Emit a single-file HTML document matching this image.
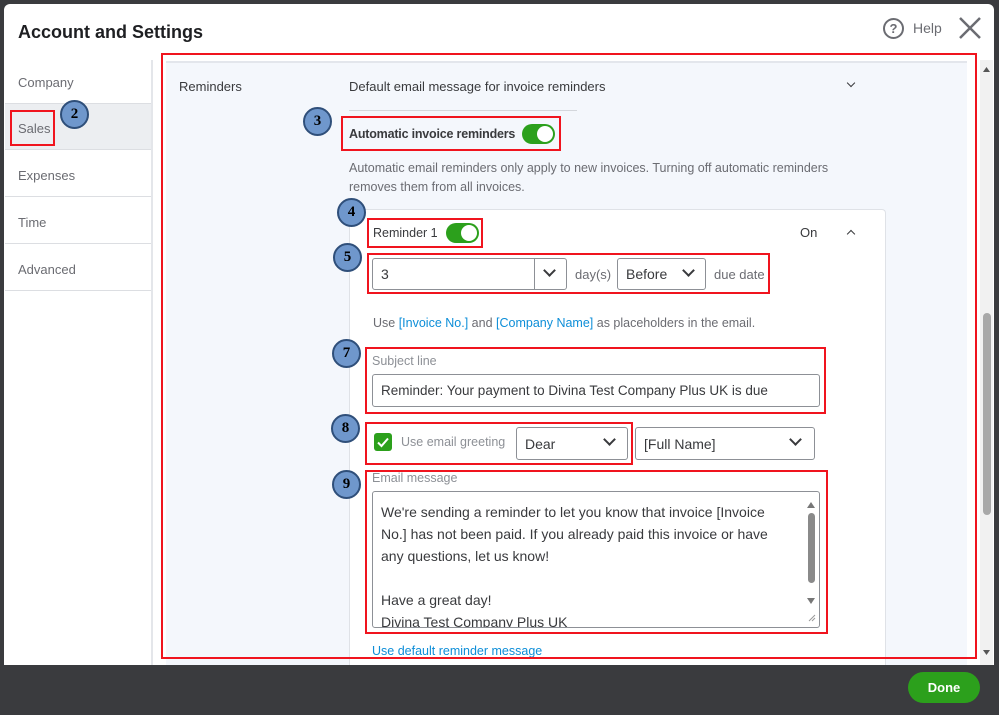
<!DOCTYPE html>
<html><head><meta charset="utf-8"><style>
*{box-sizing:border-box;margin:0;padding:0}
body{width:999px;height:715px;background:#3a3b3e;position:relative;overflow:hidden;font-family:"Liberation Sans",sans-serif;color:#393a3d}
.a{position:absolute}
.red{position:absolute;border:2px solid #f0141e}
.c{position:absolute;width:29px;height:29px;border-radius:50%;background:#6f97cc;border:2px solid #2f4f7a;font:bold 15px "Liberation Serif",serif;color:#000;text-align:center;line-height:25px}
.sb{position:absolute;left:5px;width:146px;height:46px;border-bottom:1px solid #dcdee2;font-size:13px;color:#6b6c72;padding:17px 0 0 13px}
.inp{position:absolute;border:1px solid #8d9096;border-radius:3px;background:#fff;font-size:14px;color:#393a3d}
.chev{position:absolute;width:9px;height:9px;border-right:2px solid #393a3d;border-bottom:2px solid #393a3d;transform:rotate(45deg)}
.tog{position:absolute;width:33px;height:20px;border-radius:10px;background:#2ca01c}
.tog:after{content:"";position:absolute;right:2px;top:2px;width:16px;height:16px;border-radius:50%;background:#fff}
.lnk{color:#0d8ed8}
</style></head><body>
<div class="a" style="left:4px;top:4px;width:990px;height:661px;background:#fff;border-radius:6px 6px 0 0"></div>
<div class="a" style="left:18px;top:22px;font-size:18px;font-weight:bold;color:#1e1f22">Account and Settings</div>
<div class="a" style="left:883px;top:18px;width:21px;height:21px;border:2px solid #6b6c72;border-radius:50%;font-size:13px;font-weight:bold;text-align:center;line-height:17px;color:#6b6c72">?</div>
<div class="a" style="left:913px;top:20px;font-size:14px;color:#6b6c72">Help</div>
<svg class="a" style="left:958px;top:16px" width="24" height="24"><path d="M2 2L22 22M22 2L2 22" stroke="#6b6c72" stroke-width="2.5"/></svg>
<div class="sb" style="top:58px">Company</div>
<div class="sb" style="top:104px;background:#eceef1">Sales</div>
<div class="sb" style="top:151px">Expenses</div>
<div class="sb" style="top:198px">Time</div>
<div class="sb" style="top:245px">Advanced</div>
<div class="a" style="left:151px;top:60px;width:2px;height:605px;background:#e4e6ea"></div>
<div class="a" style="left:166px;top:61px;width:801px;height:604px;background:#f4f7fc;border-top:2px solid #e3e6ec"></div>
<div class="a" style="left:179px;top:79px;font-size:13px;color:#393a3d">Reminders</div>
<div class="a" style="left:349px;top:79px;font-size:13px;color:#393a3d">Default email message for invoice reminders</div>
<div class="chev" style="left:848px;top:80px;width:6px;height:6px;border-width:1.5px"></div>
<div class="a" style="left:349px;top:110px;width:228px;height:1px;background:#d4d7dc"></div>
<div class="a" style="left:349px;top:127px;font-size:12.5px;font-weight:bold;color:#393a3d;letter-spacing:-0.2px">Automatic invoice reminders</div>
<div class="tog" style="left:522px;top:124px"></div>
<div class="a" style="left:349px;top:159px;font-size:12.5px;color:#6b6c72;line-height:19px;width:520px">Automatic email reminders only apply to new invoices. Turning off automatic reminders removes them from all invoices.</div>
<div class="a" style="left:349px;top:209px;width:537px;height:456px;background:#fff;border:1px solid #dfe2e7;border-bottom:none;border-radius:4px 4px 0 0"></div>
<div class="a" style="left:373px;top:226px;font-size:12.5px">Reminder 1</div>
<div class="tog" style="left:446px;top:223px"></div>
<div class="a" style="left:800px;top:225px;font-size:13px">On</div>
<div class="chev" style="left:848px;top:231px;width:6px;height:6px;border-width:1.5px;transform:rotate(225deg)"></div>
<div class="inp" style="left:372px;top:258px;width:195px;height:32px;padding:7px 8px">3</div>
<div class="a" style="left:534px;top:258px;width:1px;height:32px;background:#8d9096"></div>
<div class="chev" style="left:545px;top:266px"></div>
<div class="a" style="left:575px;top:267px;font-size:13px;color:#6b6c72">day(s)</div>
<div class="inp" style="left:617px;top:258px;width:89px;height:32px;padding:7px 8px">Before</div>
<div class="chev" style="left:684px;top:266px"></div>
<div class="a" style="left:714px;top:267px;font-size:13px;color:#6b6c72">due date</div>
<div class="a" style="left:373px;top:316px;font-size:12.5px;color:#6b6c72">Use <span class="lnk">[Invoice No.]</span> and <span class="lnk">[Company Name]</span> as placeholders in the email.</div>
<div class="a" style="left:372px;top:354px;font-size:12.5px;color:#8d9096">Subject line</div>
<div class="inp" style="left:372px;top:374px;width:448px;height:33px;padding:8px 8px;font-size:13.5px">Reminder: Your payment to Divina Test Company Plus UK is due</div>
<div class="a" style="left:374px;top:433px;width:18px;height:18px;border-radius:3px;background:#2ca01c"></div>
<svg class="a" style="left:374px;top:433px" width="18" height="18"><path d="M4 9.5L7.5 13L14 5.5" stroke="#fff" stroke-width="2" fill="none"/></svg>
<div class="a" style="left:401px;top:435px;font-size:12.5px;color:#8d9096">Use email greeting</div>
<div class="inp" style="left:516px;top:427px;width:112px;height:33px;padding:8px 8px">Dear</div>
<div class="chev" style="left:605px;top:435px"></div>
<div class="inp" style="left:635px;top:427px;width:180px;height:33px;padding:8px 8px">[Full Name]</div>
<div class="chev" style="left:791px;top:435px"></div>
<div class="a" style="left:372px;top:471px;font-size:12.5px;color:#8d9096">Email message</div>
<div class="inp" style="left:372px;top:491px;width:448px;height:137px;padding:9px 26px 9px 8px;line-height:22px;overflow:hidden">We're sending a reminder to let you know that invoice [Invoice No.] has not been paid. If you already paid this invoice or have any questions, let us know!<br><br>Have a great day!<br>Divina Test Company Plus UK</div>
<svg class="a" style="left:805px;top:497px" width="12" height="128"><path d="M2 11L6 5L10 11Z" fill="#777"/><path d="M2 101L6 107L10 101Z" fill="#777"/><path d="M4 124L10 118M7 124L10 121" stroke="#999" stroke-width="1"/></svg>
<div class="a" style="left:808px;top:513px;width:7px;height:70px;border-radius:4px;background:#8a8a8a"></div>
<div class="a" style="left:372px;top:644px;font-size:12.5px"><span class="lnk">Use default reminder message</span></div>
<div class="a" style="left:980px;top:60px;width:13px;height:605px;background:#f1f1f1"></div>
<svg class="a" style="left:980px;top:62px" width="13" height="600"><path d="M3 10L6.5 5L10 10Z" fill="#555"/><path d="M3 588L6.5 593L10 588Z" fill="#555"/></svg>
<div class="a" style="left:983px;top:313px;width:8px;height:202px;border-radius:4px;background:#a8a8a8"></div>
<div class="red" style="left:161px;top:53px;width:816px;height:606px"></div>
<div class="red" style="left:10px;top:110px;width:45px;height:36px"></div>
<div class="red" style="left:341px;top:116px;width:220px;height:35px"></div>
<div class="red" style="left:367px;top:218px;width:116px;height:30px"></div>
<div class="red" style="left:367px;top:253px;width:403px;height:41px"></div>
<div class="red" style="left:365px;top:347px;width:461px;height:67px"></div>
<div class="red" style="left:365px;top:422px;width:268px;height:43px"></div>
<div class="red" style="left:365px;top:470px;width:463px;height:164px"></div>
<div class="c" style="left:60px;top:100px">2</div>
<div class="c" style="left:303px;top:107px">3</div>
<div class="c" style="left:337px;top:198px">4</div>
<div class="c" style="left:333px;top:243px">5</div>
<div class="c" style="left:332px;top:339px">7</div>
<div class="c" style="left:331px;top:414px">8</div>
<div class="c" style="left:332px;top:470px">9</div>
<div class="a" style="left:908px;top:672px;width:72px;height:31px;border-radius:16px;background:#2ca01c;color:#fff;font-weight:bold;font-size:13px;text-align:center;line-height:31px">Done</div>
</body></html>
